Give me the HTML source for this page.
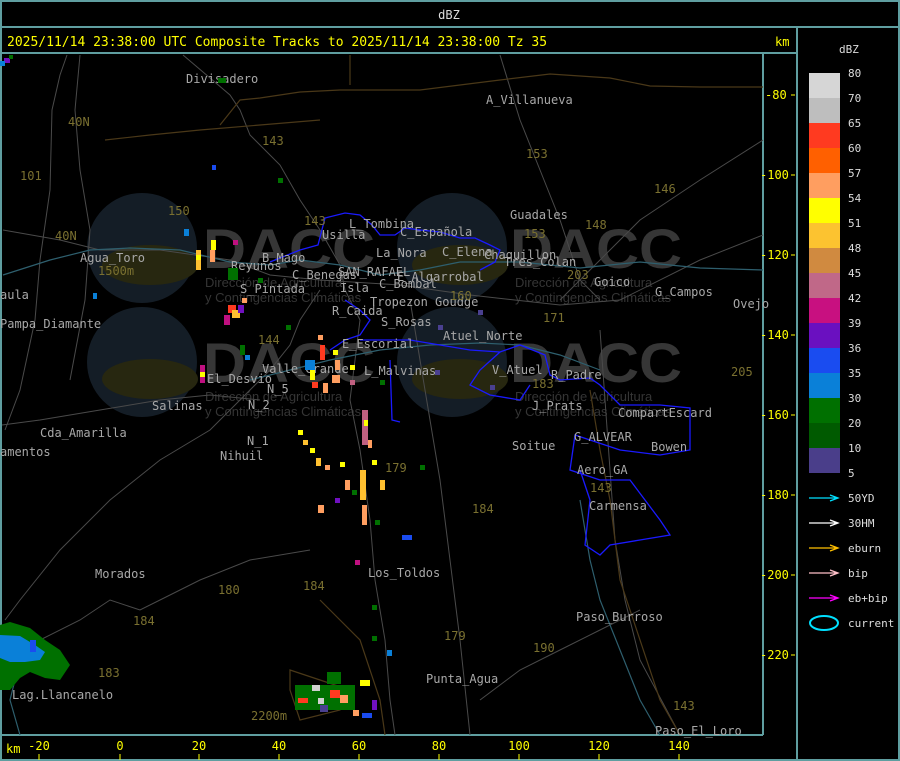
<!DOCTYPE html>
<html><head><meta charset="utf-8"><style>
html,body{margin:0;padding:0;background:#000;width:900px;height:761px;overflow:hidden}
svg{display:block}
text{font-family:"DejaVu Sans Mono","Liberation Mono",monospace}
</style></head><body>
<svg width="900" height="761" viewBox="0 0 900 761" xmlns="http://www.w3.org/2000/svg">
<rect width="900" height="761" fill="#000"/>
<g fill="none" stroke="#5f9ea0" stroke-width="2">
<rect x="1" y="1" width="898" height="759"/>
<line x1="0" y1="27" x2="900" y2="27"/>
<line x1="0" y1="53" x2="797" y2="53"/>
<line x1="797" y1="27" x2="797" y2="761"/>
<line x1="0" y1="735" x2="763" y2="735"/>
<line x1="763" y1="53" x2="763" y2="735"/>
</g>
<text x="449" y="19" fill="#ddd" font-size="12" text-anchor="middle">dBZ</text>
<text x="7" y="46" fill="#ffff00" font-size="13">2025/11/14 23:38:00 UTC Composite Tracks to 2025/11/14 23:38:00 Tz 35</text>
<text x="775" y="46" fill="#ffff00" font-size="12">km</text>

<g>
<g fill="#141d26"><circle cx="142" cy="248" r="55"/><circle cx="452" cy="248" r="55"/><circle cx="142" cy="362" r="55"/><circle cx="452" cy="362" r="55"/></g>
<g fill="#272710"><ellipse cx="150" cy="265" rx="48" ry="20"/><ellipse cx="460" cy="265" rx="48" ry="20"/><ellipse cx="150" cy="379" rx="48" ry="20"/><ellipse cx="460" cy="379" rx="48" ry="20"/></g>
<g fill="#363636" font-size="56" font-weight="bold">
<text x="203" y="268" textLength="172" lengthAdjust="spacingAndGlyphs" style="font-family:'Liberation Sans',sans-serif">DACC</text>
<text x="510" y="268" textLength="172" lengthAdjust="spacingAndGlyphs" style="font-family:'Liberation Sans',sans-serif">DACC</text>
<text x="203" y="382" textLength="172" lengthAdjust="spacingAndGlyphs" style="font-family:'Liberation Sans',sans-serif">DACC</text>
<text x="510" y="382" textLength="172" lengthAdjust="spacingAndGlyphs" style="font-family:'Liberation Sans',sans-serif">DACC</text>
</g>
<g fill="#353535" font-size="13">
<text x="205" y="287" style="font-family:'Liberation Sans',sans-serif">Dirección de Agricultura</text>
<text x="205" y="302" style="font-family:'Liberation Sans',sans-serif">y Contingencias Climáticas</text>
<text x="515" y="287" style="font-family:'Liberation Sans',sans-serif">Dirección de Agricultura</text>
<text x="515" y="302" style="font-family:'Liberation Sans',sans-serif">y Contingencias Climáticas</text>
<text x="205" y="401" style="font-family:'Liberation Sans',sans-serif">Dirección de Agricultura</text>
<text x="205" y="416" style="font-family:'Liberation Sans',sans-serif">y Contingencias Climáticas</text>
<text x="515" y="401" style="font-family:'Liberation Sans',sans-serif">Dirección de Agricultura</text>
<text x="515" y="416" style="font-family:'Liberation Sans',sans-serif">y Contingencias Climáticas</text>
</g>
</g>

<g fill="none" stroke="#4a4a4a" stroke-width="1">
<path d="M183 55 L230 95 L240 110 L250 135 L280 165 L300 200 L320 230 L340 265 L345 290 L360 320"/>
<path d="M67 55 L60 75 L52 110 L50 190 L40 260 L35 320 L20 390 L5 430"/>
<path d="M80 55 L75 110 L80 170 L90 230 L85 300 L70 380"/>
<path d="M3 230 L60 240 L100 250 L160 250 L230 260 L270 275 L320 280 L400 285 L470 295 L560 305 L620 300 L700 260 L763 235"/>
<path d="M320 290 L300 320 L290 345 L270 370 L240 400 L210 430 L160 460 L110 500 L60 550 L20 600 L5 620"/>
<path d="M360 320 L355 360 L350 400 L360 450 L370 520 L375 580 L385 640 L390 700 L395 735"/>
<path d="M410 300 L420 360 L430 420 L440 480 L450 560 L460 640 L470 735"/>
<path d="M500 55 L520 120 L540 170 L560 220 L580 280 L600 300"/>
<path d="M763 140 L700 180 L640 220 L600 260 L560 300"/>
<path d="M600 330 L605 400 L610 470 L615 540 L625 600 L640 660 L680 735"/>
<path d="M480 700 L520 670 L560 650 L600 630 L640 610"/>
<path d="M0 660 L40 640 L80 620 L110 600 L140 610 L160 600 L200 580 L250 560 L310 550"/>
<path d="M2 425 L40 420 L100 410 L160 400 L210 395 L260 400"/>
</g>
<g fill="none" stroke="#2e5f6e" stroke-width="1.2">
<path d="M3 275 L50 260 L90 250 L130 248 L180 250 L230 262 L270 265 L300 260 L340 265 L380 275 L420 270 L460 262 L520 262 L580 268 L640 262 L700 268 L763 270"/>
<path d="M250 380 L290 370 L330 360 L380 350 L430 345 L480 343 L520 345 L560 355 L600 370"/>
<path d="M580 500 L590 560 L600 600 L620 650 L640 700 L660 735"/>
<path d="M40 640 L20 660 L10 700 L20 735"/>
</g>
<g fill="none" stroke="#4a3818" stroke-width="1.2">
<path d="M220 125 L240 100 L260 98 L300 92 L340 90 L420 90 L500 80 L550 74 L610 78 L650 86 L700 87 L763 87"/>
<path d="M350 55 L350 85"/>
<path d="M105 140 L150 135 L200 130 L260 125 L320 120"/>
<path d="M320 600 L360 640 L380 700 L385 735"/>
<path d="M290 670 L320 680 L350 690 L340 710 L300 720 L290 690 Z"/>
<path d="M590 390 L600 450 L610 500 L620 580 L640 640 L660 700 L680 735"/>
</g>
<g fill="none" stroke="#1a1aff" stroke-width="1.3">
<path d="M270 262 L300 250 L318 245 L325 218 L345 213 L360 215 L372 225 L380 235 L395 235 L405 228 L420 230 L440 232 L460 238 L475 238 L490 245 L500 250 L495 262 L480 270"/>
<path d="M345 300 L360 310 L370 320 L360 335 L345 340 L330 350"/>
<path d="M360 340 L410 340 L440 345 L470 350 L500 352 L520 345 L545 355 L550 375 L560 380 L590 378 L600 385 L620 405 L660 405 L690 408 L690 450 L660 455 L620 450 L590 440 L575 435 L570 470 L600 480 L630 480 L660 520 L670 535 L640 540 L610 545 L600 555 L585 545 L590 500 L580 470"/>
<path d="M390 360 L392 420 L400 422"/>
<path d="M500 352 L480 370 L470 385 L490 395 L520 400 L530 385"/>
</g>
<g fill="#a8a8a8" font-size="12">
<text x="186" y="83">Divisadero</text>
<text x="486" y="104">A_Villanueva</text>
<text x="510" y="219">Guadales</text>
<text x="349" y="228">L_Tombina</text>
<text x="400" y="236">C_Española</text>
<text x="322" y="239">Usilla</text>
<text x="376" y="257">La_Nora</text>
<text x="442" y="256">C_Elena</text>
<text x="484" y="259">Chaquillon</text>
<text x="504" y="266">Tres_Colan</text>
<text x="262" y="262">B_Mago</text>
<text x="231" y="270">Reyunos</text>
<text x="80" y="262">Agua_Toro</text>
<text x="292" y="279">C_Benegas</text>
<text x="338" y="276">SAN_RAFAEL</text>
<text x="397" y="281">E_Algarrobal</text>
<text x="379" y="288">C_Bombal</text>
<text x="594" y="286">Goico</text>
<text x="655" y="296">G_Campos</text>
<text x="240" y="293">S_Pintada</text>
<text x="340" y="292">Isla</text>
<text x="0" y="299">aula</text>
<text x="370" y="306">Tropezon Goudge</text>
<text x="733" y="308">Ovejo</text>
<text x="332" y="315">R_Caida</text>
<text x="0" y="328">Pampa_Diamante</text>
<text x="381" y="326">S_Rosas</text>
<text x="443" y="340">Atuel_Norte</text>
<text x="342" y="348">E_Escorial</text>
<text x="262" y="373">Valle_Grande</text>
<text x="364" y="375">L_Malvinas</text>
<text x="492" y="374">V_Atuel</text>
<text x="551" y="379">R_Padre</text>
<text x="207" y="383">El_Desvio</text>
<text x="267" y="393">N_5</text>
<text x="152" y="410">Salinas</text>
<text x="248" y="409">N_2</text>
<text x="532" y="410">J_Prats</text>
<text x="618" y="417">CompartEscard</text>
<text x="40" y="437">Cda_Amarilla</text>
<text x="574" y="441">G_ALVEAR</text>
<text x="247" y="445">N_1</text>
<text x="512" y="450">Soitue</text>
<text x="651" y="451">Bowen</text>
<text x="0" y="456">amentos</text>
<text x="220" y="460">Nihuil</text>
<text x="577" y="474">Aero_GA</text>
<text x="589" y="510">Carmensa</text>
<text x="368" y="577">Los_Toldos</text>
<text x="95" y="578">Morados</text>
<text x="576" y="621">Paso_Burroso</text>
<text x="426" y="683">Punta_Agua</text>
<text x="12" y="699">Lag.Llancanelo</text>
<text x="655" y="735">Paso_El_Loro</text>
</g>
<g fill="#7a7030" font-size="12">
<text x="68" y="126">40N</text><text x="20" y="180">101</text><text x="262" y="145">143</text>
<text x="526" y="158">153</text><text x="654" y="193">146</text><text x="168" y="215">150</text>
<text x="304" y="225">143</text><text x="585" y="229">148</text><text x="55" y="240">40N</text>
<text x="524" y="238">153</text><text x="98" y="275">1500m</text><text x="567" y="279">203</text>
<text x="450" y="300">160</text><text x="543" y="322">171</text><text x="258" y="344">144</text>
<text x="532" y="388">183</text><text x="731" y="376">205</text><text x="385" y="472">179</text>
<text x="590" y="492">143</text><text x="472" y="513">184</text><text x="218" y="594">180</text>
<text x="303" y="590">184</text><text x="133" y="625">184</text><text x="444" y="640">179</text>
<text x="533" y="652">190</text><text x="98" y="677">183</text><text x="251" y="720">2200m</text>
<text x="673" y="710">143</text><text x="14" y="648">184</text>
</g>

<g>
<path d="M0 625 L10 622 L30 628 L45 640 L60 650 L70 665 L60 680 L45 678 L30 672 L20 678 L10 690 L0 690 Z" fill="#007000"/>
<path d="M0 635 L20 636 L35 645 L45 652 L40 660 L25 662 L10 662 L0 658 Z" fill="#0a80d8"/>
<rect x="30" y="640" width="6" height="12" fill="#1a4cf0"/>
<rect x="4" y="58" width="6" height="5" fill="#7010c0"/><rect x="9" y="55" width="4" height="4" fill="#007000"/>
<rect x="0" y="61" width="5" height="5" fill="#0a80d8"/>
<rect x="295" y="685" width="60" height="25" fill="#007000"/>
<rect x="312" y="685" width="8" height="6" fill="#d0d0d0"/><rect x="330" y="690" width="10" height="8" fill="#ff3a20"/>
<rect x="340" y="695" width="8" height="8" fill="#ff9e60"/><rect x="360" y="680" width="10" height="6" fill="#ffff00"/>
<rect x="298" y="698" width="10" height="5" fill="#ff3a20"/><rect x="318" y="698" width="6" height="6" fill="#d0d0d0"/>
<rect x="320" y="705" width="8" height="7" fill="#4a4090"/><rect x="353" y="710" width="6" height="6" fill="#ff9e60"/>
<rect x="372" y="700" width="5" height="10" fill="#7010c0"/><rect x="362" y="713" width="10" height="5" fill="#1a4cf0"/>
<rect x="327" y="672" width="14" height="12" fill="#007000"/>
</g>
<g>
<rect x="196" y="250" width="5" height="20" fill="#ffc030"/><rect x="196" y="255" width="5" height="5" fill="#ffff00"/>
<rect x="211" y="240" width="5" height="10" fill="#ffff00"/><rect x="210" y="250" width="5" height="12" fill="#ff9e60"/>
<rect x="212" y="165" width="4" height="5" fill="#1a4cf0"/><rect x="184" y="229" width="5" height="7" fill="#0a80d8"/>
<rect x="233" y="240" width="5" height="5" fill="#c01080"/><rect x="228" y="268" width="10" height="12" fill="#007000"/>
<rect x="228" y="305" width="8" height="8" fill="#ff3a20"/><rect x="232" y="310" width="8" height="8" fill="#ffc030"/>
<rect x="224" y="315" width="6" height="10" fill="#c01080"/><rect x="238" y="305" width="6" height="8" fill="#7010c0"/>
<rect x="242" y="298" width="5" height="5" fill="#ff9e60"/><rect x="240" y="345" width="5" height="10" fill="#007000"/>
<rect x="200" y="365" width="5" height="18" fill="#c01080"/><rect x="200" y="372" width="5" height="5" fill="#ffff00"/>
<rect x="245" y="355" width="5" height="5" fill="#0a80d8"/><rect x="278" y="178" width="5" height="5" fill="#007000"/>
<rect x="305" y="360" width="10" height="10" fill="#0a80d8"/><rect x="310" y="370" width="5" height="10" fill="#ffff00"/>
<rect x="320" y="345" width="5" height="15" fill="#ff3a20"/><rect x="318" y="335" width="5" height="5" fill="#ff9e60"/>
<rect x="333" y="350" width="5" height="5" fill="#ffff00"/><rect x="335" y="360" width="5" height="10" fill="#ff9e60"/>
<rect x="332" y="375" width="8" height="8" fill="#ff9e60"/><rect x="312" y="382" width="6" height="6" fill="#ff3a20"/>
<rect x="350" y="365" width="5" height="5" fill="#ffff00"/><rect x="350" y="380" width="5" height="5" fill="#c06080"/>
<rect x="323" y="383" width="5" height="10" fill="#ff9e60"/><rect x="362" y="410" width="6" height="35" fill="#c06080"/>
<rect x="364" y="420" width="4" height="6" fill="#ffff00"/><rect x="368" y="440" width="4" height="8" fill="#ff9e60"/>
<rect x="298" y="430" width="5" height="5" fill="#ffff00"/><rect x="303" y="440" width="5" height="5" fill="#ffc030"/>
<rect x="310" y="448" width="5" height="5" fill="#ffff00"/><rect x="316" y="458" width="5" height="8" fill="#ffc030"/>
<rect x="325" y="465" width="5" height="5" fill="#ff9e60"/><rect x="340" y="462" width="5" height="5" fill="#ffff00"/>
<rect x="345" y="480" width="5" height="10" fill="#ff9e60"/><rect x="352" y="490" width="5" height="5" fill="#007000"/>
<rect x="335" y="498" width="5" height="5" fill="#7010c0"/><rect x="318" y="505" width="6" height="8" fill="#ff9e60"/>
<rect x="360" y="470" width="6" height="30" fill="#ffc030"/><rect x="372" y="460" width="5" height="5" fill="#ffff00"/>
<rect x="380" y="480" width="5" height="10" fill="#ffc030"/><rect x="362" y="505" width="5" height="20" fill="#ff9e60"/>
<rect x="375" y="520" width="5" height="5" fill="#007000"/><rect x="402" y="535" width="10" height="5" fill="#1a4cf0"/>
<rect x="355" y="560" width="5" height="5" fill="#c01080"/><rect x="372" y="605" width="5" height="5" fill="#007000"/>
<rect x="387" y="650" width="5" height="6" fill="#0a80d8"/><rect x="372" y="636" width="5" height="5" fill="#007000"/>
<rect x="478" y="310" width="5" height="5" fill="#4a4090"/><rect x="435" y="370" width="5" height="5" fill="#4a4090"/>
<rect x="490" y="385" width="5" height="5" fill="#4a4090"/><rect x="420" y="465" width="5" height="5" fill="#007000"/>
<rect x="438" y="325" width="5" height="5" fill="#4a4090"/><rect x="93" y="293" width="4" height="6" fill="#0a80d8"/>
<rect x="286" y="325" width="5" height="5" fill="#007000"/><rect x="380" y="380" width="5" height="5" fill="#007000"/>
<rect x="218" y="78" width="8" height="5" fill="#007000"/><rect x="258" y="278" width="5" height="5" fill="#007000"/>
</g>

<g fill="#ffff00" font-size="12">
<text x="6" y="753">km</text>
<text x="39" y="750" text-anchor="middle">-20</text><text x="120" y="750" text-anchor="middle">0</text>
<text x="199" y="750" text-anchor="middle">20</text><text x="279" y="750" text-anchor="middle">40</text>
<text x="359" y="750" text-anchor="middle">60</text><text x="439" y="750" text-anchor="middle">80</text>
<text x="519" y="750" text-anchor="middle">100</text><text x="599" y="750" text-anchor="middle">120</text>
<text x="679" y="750" text-anchor="middle">140</text>
<text x="765" y="99">-80</text><text x="760" y="179">-100</text><text x="760" y="259">-120</text>
<text x="760" y="339">-140</text><text x="760" y="419">-160</text><text x="760" y="499">-180</text>
<text x="760" y="579">-200</text><text x="760" y="659">-220</text>
</g>
<g stroke="#ffff00" stroke-width="1">
<path d="M39 754v6M120 754v6M199 754v6M279 754v6M359 754v6M439 754v6M519 754v6M599 754v6M679 754v6"/>
<path d="M791 95h4M791 175h4M791 255h4M791 335h4M791 415h4M791 495h4M791 575h4M791 655h4"/>
</g>

<text x="839" y="53" fill="#ddd" font-size="11">dBZ</text>
<g>
<rect x="809" y="73" width="31" height="25" fill="#d6d6d6"/>
<rect x="809" y="98" width="31" height="25" fill="#bebebe"/>
<rect x="809" y="123" width="31" height="25" fill="#ff3a20"/>
<rect x="809" y="148" width="31" height="25" fill="#ff6000"/>
<rect x="809" y="173" width="31" height="25" fill="#ff9e60"/>
<rect x="809" y="198" width="31" height="25" fill="#ffff00"/>
<rect x="809" y="223" width="31" height="25" fill="#fcc330"/>
<rect x="809" y="248" width="31" height="25" fill="#d08a40"/>
<rect x="809" y="273" width="31" height="25" fill="#c06888"/>
<rect x="809" y="298" width="31" height="25" fill="#c81080"/>
<rect x="809" y="323" width="31" height="25" fill="#6a10c0"/>
<rect x="809" y="348" width="31" height="25" fill="#1a4cf0"/>
<rect x="809" y="373" width="31" height="25" fill="#0a80d8"/>
<rect x="809" y="398" width="31" height="25" fill="#007000"/>
<rect x="809" y="423" width="31" height="25" fill="#005a00"/>
<rect x="809" y="448" width="31" height="25" fill="#4a3e8a"/>
</g>
<g fill="#ddd" font-size="11">
<text x="848" y="77">80</text><text x="848" y="102">70</text><text x="848" y="127">65</text>
<text x="848" y="152">60</text><text x="848" y="177">57</text><text x="848" y="202">54</text>
<text x="848" y="227">51</text><text x="848" y="252">48</text><text x="848" y="277">45</text>
<text x="848" y="302">42</text><text x="848" y="327">39</text><text x="848" y="352">36</text>
<text x="848" y="377">35</text><text x="848" y="402">30</text><text x="848" y="427">20</text>
<text x="848" y="452">10</text><text x="848" y="477">5</text>
<text x="848" y="502">50YD</text><text x="848" y="527">30HM</text><text x="848" y="552">eburn</text>
<text x="848" y="577">bip</text><text x="848" y="602">eb+bip</text><text x="848" y="627">current</text>
</g>
<g fill="none" stroke-width="1.3">
<path d="M809 498h29M830 495l8 3-8 3" stroke="#00e0ff"/>
<path d="M809 523h29M830 520l8 3-8 3" stroke="#fff"/>
<path d="M809 548h29M830 545l8 3-8 3" stroke="#ffc000"/>
<path d="M809 573h29M830 570l8 3-8 3" stroke="#ffc0c8"/>
<path d="M809 598h29M830 595l8 3-8 3" stroke="#ff00ff"/>
<ellipse cx="824" cy="623" rx="14" ry="7" stroke="#00e0ff" stroke-width="2"/>
</g>
</svg>
</body></html>
